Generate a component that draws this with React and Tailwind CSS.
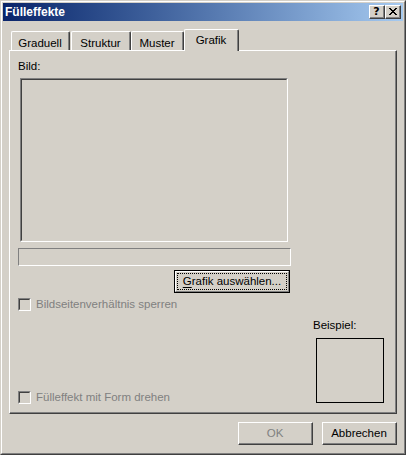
export default function App() {
  return (
    <div className="w-[406px] h-[455px] bg-[#d4d0c8] font-['Liberation_Sans',Arial,sans-serif] text-[11.5px] leading-[13px] text-black select-none">
      <div className="h-full border border-t-[#d4d0c8] border-l-[#d4d0c8] border-r-[#404040] border-b-[#404040]">
        <div className="h-full border border-t-white border-l-white border-r-[#808080] border-b-[#808080] p-px flex flex-col">
          {/* Title bar */}
          <div className="h-[18px] shrink-0 flex items-center bg-gradient-to-r from-[#0a246a] to-[#a6caf0] pl-[2px] pr-[2px]">
            <span className="text-white font-bold text-[12px] leading-[14px]">Fülleffekte</span>
            <div className="ml-auto flex">
              <CapBtn>
                <span className="font-['DejaVu_Sans',sans-serif] font-bold text-[11px] leading-[11px] text-black">?</span>
              </CapBtn>
              <CapBtn>
                <svg width="8" height="7" viewBox="0 0 8 7" shapeRendering="crispEdges">
                  <path
                    fill="#000"
                    d="M0 0h2v1H0z M6 0h2v1H6z M1 1h2v1H1z M5 1h2v1H5z M2 2h4v1H2z M3 3h2v1H3z M2 4h4v1H2z M1 5h2v1H1z M5 5h2v1H5z M0 6h2v1H0z M6 6h2v1H6z"
                  />
                </svg>
              </CapBtn>
            </div>
          </div>

          {/* Body */}
          <div className="flex-1 flex flex-col px-[6px] pt-[8px]">
            {/* Tabs */}
            <div className="h-[21px] flex items-end pl-[2px] relative z-10">
              <Tab w="w-[59px]">Graduell</Tab>
              <Tab w="w-[60px]" className="ml-px">Struktur</Tab>
              <Tab w="w-[53px]">Muster</Tab>
              <div className="w-[55px] h-[22px] -mb-px bg-[#d4d0c8] rounded-tl-[2px] rounded-tr-[2px] border-t border-l border-t-white border-l-white border-r border-r-[#404040] flex">
                <div className="flex-1 border-r border-r-[#808080] flex justify-center pt-[4px]">
                  <span>Grafik</span>
                </div>
              </div>
            </div>

            {/* Panel */}
            <div className="h-[364px] shrink-0 border border-t-white border-l-white border-r-[#404040] border-b-[#404040]">
              <div className="h-full border-r border-b border-r-[#808080] border-b-[#808080] flex flex-col pl-[8px] pb-[9px]">
                <div className="mt-[9px] h-[13px]">Bild:</div>
                <div className="mt-[5px] ml-[2px] w-[268px] h-[164px] border border-t-[#808080] border-l-[#808080] border-r-white border-b-white">
                  <div className="h-full border border-t-[#404040] border-l-[#404040] border-r-[#d4d0c8] border-b-[#d4d0c8]" />
                </div>
                <div className="mt-[6px] w-[273px] h-[18px] border border-t-[#808080] border-l-[#808080] border-r-white border-b-white" />
                <div className="mt-[4px] w-[273px] flex justify-end pr-px">
                  <div className="w-[116px] h-[23px] border border-black">
                    <div className="h-full border border-t-white border-l-white border-r-[#808080] border-b-[#808080] p-px">
                      <div className="h-full border border-dotted border-black flex items-center justify-center">
                        <span>
                          <span className="underline underline-offset-[2px]">G</span>rafik auswählen...
                        </span>
                      </div>
                    </div>
                  </div>
                </div>
                <div className="mt-[5px]">
                  <Check label="Bildseitenverhältnis sperren" />
                </div>

                <div className="flex-1 flex items-end justify-between pr-[11px]">
                  <div className="mb-[-1px]">
                    <Check label="Fülleffekt mit Form drehen" />
                  </div>
                  <div className="flex flex-col items-start">
                    <div className="h-[13px]">Beispiel:</div>
                    <div className="mt-[6px] ml-[3px] w-[68px] h-[65px] border border-black" />
                  </div>
                </div>
              </div>
            </div>

            {/* Buttons */}
            <div className="mt-[8px] flex justify-end gap-[9px]">
              <Btn disabled>OK</Btn>
              <Btn>Abbrechen</Btn>
            </div>
          </div>
        </div>
      </div>
    </div>
  );
}

function CapBtn({ children }) {
  return (
    <div className="w-[16px] h-[14px] bg-[#d4d0c8] border border-t-white border-l-white border-r-[#404040] border-b-[#404040]">
      <div className="h-full border-r border-b border-r-[#808080] border-b-[#808080] flex items-center justify-center">
        {children}
      </div>
    </div>
  );
}

function Tab({ children, w, className = "" }) {
  return (
    <div
      className={`${w} ${className} h-[19px] rounded-tl-[2px] rounded-tr-[2px] border-t border-l border-t-white border-l-white border-r border-r-[#404040] flex`}
    >
      <div className="flex-1 border-r border-r-[#808080] flex justify-center pt-[5px]">
        <span>{children}</span>
      </div>
    </div>
  );
}

function Check({ label }) {
  return (
    <div className="flex items-center h-[13px]">
      <div className="w-[13px] h-[13px] border border-t-[#808080] border-l-[#808080] border-r-white border-b-white">
        <div className="h-full border border-t-[#404040] border-l-[#404040] border-r-[#d4d0c8] border-b-[#d4d0c8] bg-[#d4d0c8]" />
      </div>
      <span className="ml-[5px] text-[#808080]">{label}</span>
    </div>
  );
}

function Btn({ children, disabled }) {
  return (
    <div className="w-[75px] h-[23px] border border-t-white border-l-white border-r-[#404040] border-b-[#404040]">
      <div className="h-full border-r border-b border-r-[#808080] border-b-[#808080] flex items-center justify-center">
        <span className={disabled ? "text-[#808080]" : "text-black"}>{children}</span>
      </div>
    </div>
  );
}
